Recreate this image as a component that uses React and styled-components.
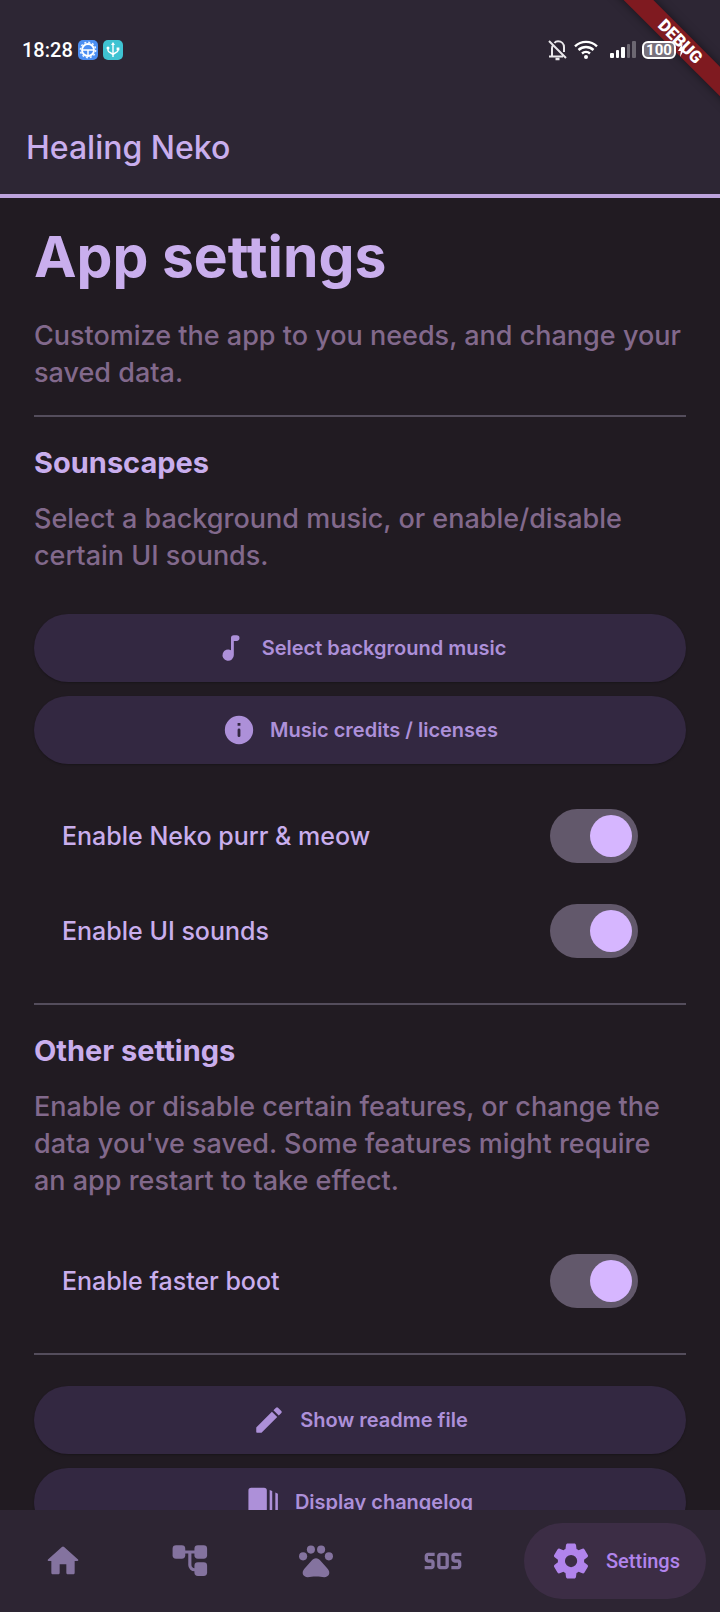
import React from "react";
import styled, { createGlobalStyle, css } from "styled-components";
import { MdSos } from "react-icons/md";

const GlobalStyle = createGlobalStyle`
  *, *::before, *::after { box-sizing: border-box; }
  body {
    margin: 0;
    background: #211b22;
    font-family: Inter, "Noto Sans", sans-serif;
  }
`;

const Shell = styled.div`
  position: relative;
  display: flex;
  flex-direction: column;
  height: 100vh;
  overflow: hidden;
  background: #211b22;
  color: #c9aeed;
`;

const Header = styled.header`
  flex: none;
  background: #2d2634;
  border-bottom: 4px solid #bda3dd;
`;

const StatusBar = styled.div`
  position: relative;
  z-index: 1;
  display: flex;
  align-items: center;
  justify-content: space-between;
  height: 100px;
  padding: 0 35px 0 22px;
  color: #ffffff;
`;

const StatusGroup = styled.div`
  display: flex;
  align-items: center;
  gap: ${(p) => p.$gap}px;
`;

const Clock = styled.time`
  font: 500 20px/24px Roboto, sans-serif;
`;

const AppTitle = styled.div`
  padding: 28px 26px 26px;
  font-size: 32px;
  font-weight: 500;
  line-height: 40px;
`;

const BatteryWrap = styled.div`
  display: flex;
  align-items: center;
  gap: 2px;
`;

const Battery = styled.div`
  width: 34px;
  height: 18px;
  border: 2px solid #ffffff;
  border-radius: 6px;
  background: #77717c;
  font: 700 15px/14px Roboto, sans-serif;
  text-align: center;
`;

const BannerClip = styled.div`
  position: absolute;
  top: 0;
  right: 0;
  width: 120px;
  height: 120px;
  overflow: hidden;
  pointer-events: none;
`;

const Banner = styled.div`
  position: absolute;
  top: 31px;
  right: -60px;
  width: 200px;
  height: 21px;
  transform: rotate(45deg);
  background: ${(p) => (p.$textOnly ? "transparent" : "#7f1a20")};
  box-shadow: ${(p) => (p.$textOnly ? "none" : "0 0 10px rgba(0, 0, 0, 0.5)")};
  color: #ffffff;
  font: 900 17px/21px Roboto, sans-serif;
  text-align: center;
`;

const Content = styled.main`
  flex: 1;
  min-height: 0;
  overflow-y: auto;
  scrollbar-width: none;
  padding: 21px 34px;
`;

const PageTitle = styled.h1`
  margin: 0 0 22px;
  font-size: 57px;
  font-weight: 700;
  line-height: 76px;
`;

const SectionTitle = styled.h2`
  margin: 0 0 19px;
  font-size: 29px;
  font-weight: 700;
  line-height: 36px;
`;

const Description = styled.p`
  margin: 0;
  color: #82698c;
  font-size: 27px;
  font-weight: 500;
  line-height: 37px;
`;

const Divider = styled.hr`
  height: 2px;
  margin: ${(p) => p.$top}px 0 28px;
  border: 0;
  background: #544d5c;
`;

const ButtonStack = styled.div`
  display: flex;
  flex-direction: column;
  gap: 14px;
  margin-top: ${(p) => p.$top}px;
`;

const PillButton = styled.button`
  display: flex;
  align-items: center;
  justify-content: center;
  gap: 14px;
  flex: none;
  width: 100%;
  height: 68px;
  padding: 0;
  border: 0;
  border-radius: 34px;
  background: #332841;
  box-shadow: 0 1px 2px rgba(0, 0, 0, 0.25);
  color: #ad90d9;
  font: 600 20px/26px Inter, "Noto Sans", sans-serif;
`;

const SwitchList = styled.div`
  margin-top: ${(p) => p.$top}px;
`;

const SwitchRow = styled.label`
  display: flex;
  align-items: center;
  justify-content: space-between;
  height: 95px;
  padding: 0 48px 0 28px;
  font-size: 25px;
  font-weight: 500;
`;

const Switch = styled.input`
  appearance: none;
  flex: none;
  width: 88px;
  height: 54px;
  margin: 0;
  padding: 6px;
  border-radius: 27px;
  background: #62586b;
  &::before {
    content: "";
    display: block;
    width: 42px;
    height: 42px;
    border-radius: 50%;
    background: #d6b6ff;
  }
  &:checked::before {
    margin-left: auto;
  }
`;

const NavBar = styled.nav`
  flex: none;
  display: flex;
  align-items: center;
  height: 102px;
  padding-right: 14px;
  background: #2d2533;
`;

const NavItem = styled.a`
  display: flex;
  flex: 1;
  align-items: center;
  justify-content: center;
  gap: 14px;
  height: 76px;
  color: #84739f;
  text-decoration: none;
  ${(p) =>
    p.$active &&
    css`
      flex: none;
      margin-left: 18px;
      padding: 0 26px;
      border-radius: 38px;
      background: #3c2d45;
      color: #b184ec;
      font: 500 20px/26px Roboto, sans-serif;
    `}
`;

const Icon = ({ size, children, ...rest }) => (
  <svg width={size} height={size} viewBox="0 0 24 24" fill="currentColor" aria-hidden="true" {...rest}>
    {children}
  </svg>
);

const MusicIcon = () => (
  <Icon size={34}>
    <path d="M12 5v8.55A4 4 0 1 0 14 17V7h2a2 2 0 0 0 0-4h-2a2 2 0 0 0-2 2z" />
  </Icon>
);

const InfoIcon = () => (
  <Icon size={34}>
    <path
      fillRule="evenodd"
      d="M12 2a10 10 0 1 0 0 20 10 10 0 0 0 0-20zM12 11a1 1 0 0 1 1 1v4a1 1 0 0 1-2 0v-4a1 1 0 0 1 1-1zM11 7h2v2h-2z"
    />
  </Icon>
);

const PencilIcon = () => (
  <Icon size={34}>
    <path d="M3 17.46v3.04c0 .28.22.5.5.5h3.04c.13 0 .26-.05.35-.15L17.81 9.94l-3.75-3.75L3.15 17.1c-.1.1-.15.22-.15.36zM20.71 7.04a1 1 0 0 0 0-1.41l-2.34-2.34a1 1 0 0 0-1.41 0l-1.83 1.83 3.75 3.75 1.83-1.83z" />
  </Icon>
);

const ChangelogIcon = () => (
  <Icon size={34}>
    <rect x="1" y="2" width="13" height="20" rx="2" />
    <path d="M16 3.6l1.8.7v15.4l-1.8.7zM20 5.3l1.8.8v11.8l-1.8.8z" />
  </Icon>
);

const HomeIcon = () => (
  <Icon size={40}>
    <path d="M10 19v-5h4v5c0 .55.45 1 1 1h3c.55 0 1-.45 1-1v-7h1.7c.46 0 .68-.57.33-.87L12.67 3.6a1 1 0 0 0-1.34 0l-8.36 7.53c-.34.3-.13.87.33.87H5v7c0 .55.45 1 1 1h3c.55 0 1-.45 1-1z" />
  </Icon>
);

const TreeIcon = () => (
  <Icon size={38}>
    <g transform="translate(1 2)">
      <rect x="0" y="0" width="8" height="8.6" rx="2.2" />
      <rect x="13.8" y="0" width="8" height="8.6" rx="2.2" />
      <rect x="13.800" y="10.800" width="8" height="8.600" rx="2.2" />
      <path d="M7.5 4.3h7M10.900 4.5v8a3 3 0 0 0 3 3h.5" fill="none" stroke="currentColor" strokeWidth="2" />
    </g>
  </Icon>
);

const PawIcon = () => (
  <Icon size={36}>
    <circle cx="3.4" cy="8.9" r="2.7" />
    <circle cx="8.6" cy="4.400" r="2.7" />
    <circle cx="15.4" cy="4.400" r="2.7" />
    <circle cx="20.6" cy="8.9" r="2.7" />
    <path d="M12 10.2c1.2 0 2.2.6 3 1.6l4.9 5.6c2 2.4.8 5.4-2.4 5.4-1.8 0-3-.4-5.5-.4s-3.7.4-5.5.4c-3.2 0-4.4-3-2.4-5.4l4.9-5.600c.8-1 1.8-1.6 3-1.6z" />
  </Icon>
);

const GearIcon = () => (
  <Icon size={42}>
    <path
      fillRule="evenodd"
      d="M19.5 12c0-.23-.01-.45-.03-.68l1.86-1.41c.4-.3.51-.86.26-1.3l-1.87-3.23a.99.99 0 0 0-1.25-.42l-2.15.91c-.37-.26-.76-.49-1.17-.68l-.29-2.31c-.06-.5-.49-.88-.99-.88h-3.730c-.51 0-.94.38-1 .88l-.29 2.310c-.41.19-.8.420-1.170.680l-2.150-.910c-.46-.2-1-.020-1.250.420L2.410 8.620c-.25.440-.140.990.260 1.300l1.860 1.410a7.300 7.300 0 0 0 0 1.350l-1.860 1.410c-.4.300-.510.860-.260 1.300l1.870 3.230c.25.440.790.620 1.250.420l2.150-.910c.37.260.760.490 1.170.680l.290 2.310c.06.500.490.880.990.880h3.730c.5 0 .930-.380.990-.880l.290-2.310c.410-.190.800-.420 1.170-.680l2.150.910c.460.200 1 .020 1.250-.420l1.870-3.230c.250-.440.140-.990-.260-1.300l-1.860-1.410c.030-.230.040-.450.040-.680zm-7.460 3.500a3.500 3.500 0 1 1 0-7 3.500 3.500 0 0 1 0 7z"
    />
  </Icon>
);

const AutoBadge = () => (
  <svg width="20" height="20" viewBox="0 0 20 20" aria-hidden="true">
    <rect width="20" height="20" rx="5" fill="#4b8ef2" />
    <circle cx="10" cy="10" r="7.6" fill="none" stroke="#e8f2ff" strokeWidth="1.6" strokeDasharray="1.99 1.99" />
    <circle cx="10" cy="10" r="6" fill="none" stroke="#fff" strokeWidth="1.8" />
    <path d="M4.5 10h11M10 10v6" stroke="#fff" strokeWidth="1.5" />
  </svg>
);

const UsbBadge = () => (
  <svg width="20" height="20" viewBox="0 0 20 20" fill="none" stroke="#fff" strokeWidth="1.4" aria-hidden="true">
    <rect width="20" height="20" rx="5" fill="#3fc3d2" stroke="none" />
    <path d="M10 4v13M5 8v2.5c0 2 5 2.5 5 4.5M15 9v1.5c0 2-5 2.5-5 4.5" />
    <path d="M10 2l2 3H8z" fill="#fff" stroke="none" />
    <circle cx="5" cy="8" r="1.5" fill="#fff" stroke="none" />
    <path d="M13.6 7.5h2.8v2.8h-2.8z" fill="#fff" stroke="none" />
  </svg>
);

const BellOffIcon = () => (
  <svg width="20" height="22" viewBox="0 0 20 22" fill="none" stroke="#e9e7ea" strokeWidth="2" aria-hidden="true">
    <path d="M1 2l17 17M1 17.500h14M4 17V9.500c0-1.500.3-2.400.9-3.300M6.500 4C7.300 2.800 8.600 2.200 10 2.200c3.400 0 6 2.400 6 6V13" />
    <path d="M7.5 20h4" strokeWidth="2.5" />
  </svg>
);

const WifiIcon = () => (
  <svg width="24" height="20" viewBox="0 0 24 20" fill="none" stroke="#fff" strokeWidth="2.4" aria-hidden="true">
    <path d="M1 6.300a16 16 0 0 1 22 0M4.500 10a11 11 0 0 1 15 0M8 13.500a6 6 0 0 1 8 0" />
    <circle cx="12" cy="17" r="2" fill="#fff" stroke="none" />
  </svg>
);

const SignalIcon = () => (
  <svg width="26" height="18" viewBox="0 0 26 18" fill="#fff" aria-hidden="true">
    <rect x="0" y="12" width="4" height="5" rx="1" />
    <rect x="6" y="9" width="3" height="8" rx="1" />
    <rect x="11" y="6" width="4" height="11" rx="1" />
    <rect x="17" y="3" width="3" height="14" rx="1" opacity=".3" />
    <rect x="22" y="0" width="4" height="17" rx="1" opacity=".3" />
  </svg>
);

const BoltIcon = () => (
  <svg width="7" height="16" viewBox="0 0 7 16" fill="#fff" aria-hidden="true">
    <path d="M4.5 1L0 9h2.8L2 15l5-8.5H4z" />
  </svg>
);

const Toggle = ({ label }) => (
  <SwitchRow>
    {label}
    <Switch type="checkbox" role="switch" defaultChecked />
  </SwitchRow>
);

export default function App() {
  return (
    <>
      <GlobalStyle />
      <Shell>
        <Header>
          <BannerClip aria-hidden="true">
            <Banner />
          </BannerClip>
          <StatusBar>
            <StatusGroup $gap={5}>
              <Clock>18:28</Clock>
              <StatusGroup $gap={5}>
                <AutoBadge />
                <UsbBadge />
              </StatusGroup>
            </StatusGroup>
            <StatusGroup $gap={6}>
              <BellOffIcon />
              <StatusGroup $gap={12}>
                <WifiIcon />
                <StatusGroup $gap={6}>
                  <SignalIcon />
                  <BatteryWrap>
                    <Battery>100</Battery>
                    <BoltIcon />
                  </BatteryWrap>
                </StatusGroup>
              </StatusGroup>
            </StatusGroup>
            <BannerClip>
              <Banner $textOnly>DEBUG</Banner>
            </BannerClip>
          </StatusBar>
          <AppTitle>Healing Neko</AppTitle>
        </Header>

        <Content>
          <PageTitle>App settings</PageTitle>
          <Description>Customize the app to you needs, and change your saved data.</Description>
          <Divider $top={24} />

          <SectionTitle>Sounscapes</SectionTitle>
          <Description>Select a background music, or enable/disable certain UI sounds.</Description>
          <ButtonStack $top={40}>
            <PillButton type="button"><MusicIcon />Select background music</PillButton>
            <PillButton type="button"><InfoIcon />Music credits / licenses</PillButton>
          </ButtonStack>
          <SwitchList $top={24}>
            <Toggle label="Enable Neko purr & meow" />
            <Toggle label="Enable UI sounds" />
          </SwitchList>
          <Divider $top={25} />

          <SectionTitle>Other settings</SectionTitle>
          <Description>
            Enable or disable certain features, or change the data you've saved. Some features might
            require an app restart to take effect.
          </Description>
          <SwitchList $top={34}>
            <Toggle label="Enable faster boot" />
          </SwitchList>
          <Divider $top={25} />

          <ButtonStack $top={31}>
            <PillButton type="button"><PencilIcon />Show readme file</PillButton>
            <PillButton type="button"><ChangelogIcon />Display changelog</PillButton>
          </ButtonStack>
        </Content>

        <NavBar>
          <NavItem href="#home" aria-label="Home"><HomeIcon /></NavItem>
          <NavItem href="#tree" aria-label="Guides"><TreeIcon /></NavItem>
          <NavItem href="#neko" aria-label="Neko"><PawIcon /></NavItem>
          <NavItem href="#sos" aria-label="Emergency"><MdSos size={40} /></NavItem>
          <NavItem href="#settings" $active aria-current="page"><GearIcon />Settings</NavItem>
        </NavBar>
      </Shell>
    </>
  );
}
